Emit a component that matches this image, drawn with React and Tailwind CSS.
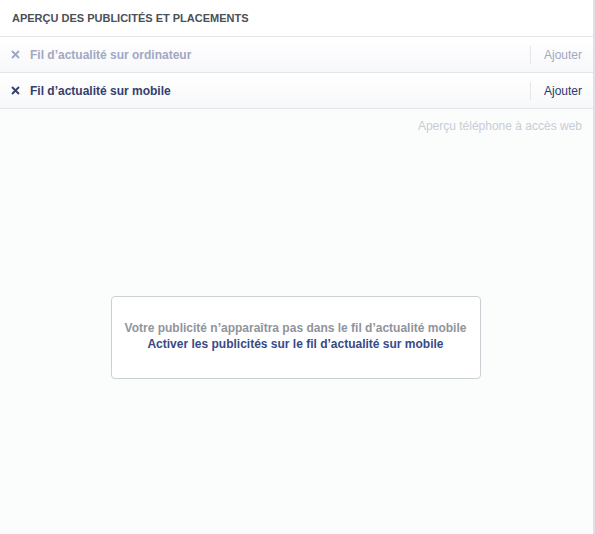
import React from "react";

function XIcon({ color }) {
  return (
    <svg width="9" height="9" viewBox="0 0 9 9" className="shrink-0">
      <path d="M1 1 L8 8 M8 1 L1 8" stroke={color} strokeWidth="1.9" strokeLinecap="butt" />
    </svg>
  );
}

function Row({ label, active }) {
  const color = active ? "#34406e" : "#a1a8c4";
  return (
    <div className="flex h-[36px] items-center border-b border-[#e3e5e8] bg-gradient-to-b from-white to-[#f7f8fa] pl-[11px] pr-[11px]">
      <XIcon color={color} />
      <span className="ml-[10px] text-[12px] font-bold" style={{ color }}>
        {label}
      </span>
      <div className="ml-auto flex items-center">
        <div className="h-[18px] w-px bg-[#e5e6e9]" />
        <span className="ml-[13px] text-[12px]" style={{ color: active ? "#2b3a6e" : "#a1a8c4" }}>
          Ajouter
        </span>
      </div>
    </div>
  );
}

export default function App() {
  return (
    <div
      className="flex h-[534px] w-[595px] bg-white"
      style={{ fontFamily: '"Liberation Sans", Arial, sans-serif' }}
    >
      <div className="flex w-[593px] flex-col bg-[#fbfcfc]">
        <div className="flex h-[37px] items-center border-b border-[#e5e6e9] bg-white px-3">
          <span className="text-[11px] font-bold uppercase text-[#4b4f56]">
            Aperçu des publicités et placements
          </span>
        </div>
        <Row label="Fil d’actualité sur ordinateur" active={false} />
        <Row label="Fil d’actualité sur mobile" active={true} />
        <div className="flex justify-end pr-[11px] pt-[9px] text-[12px] leading-[16px] text-[#c8ccd6]">
          Aperçu téléphone à accès web
        </div>
        <div className="mt-[162px] flex justify-center pr-[2px]">
          <div className="flex h-[83px] w-[370px] flex-col items-center rounded-[4px] border border-[#ccd0d5] bg-white pt-[23px] text-[12px] font-bold leading-[16px]">
            <span className="text-[#90949c]">Votre publicité n’apparaîtra pas dans le fil d’actualité mobile</span>
            <span className="text-[#364a86]">Activer les publicités sur le fil d’actualité sur mobile</span>
          </div>
        </div>
      </div>
      <div className="w-[2px] bg-[#dfe1e5]" />
    </div>
  );
}
